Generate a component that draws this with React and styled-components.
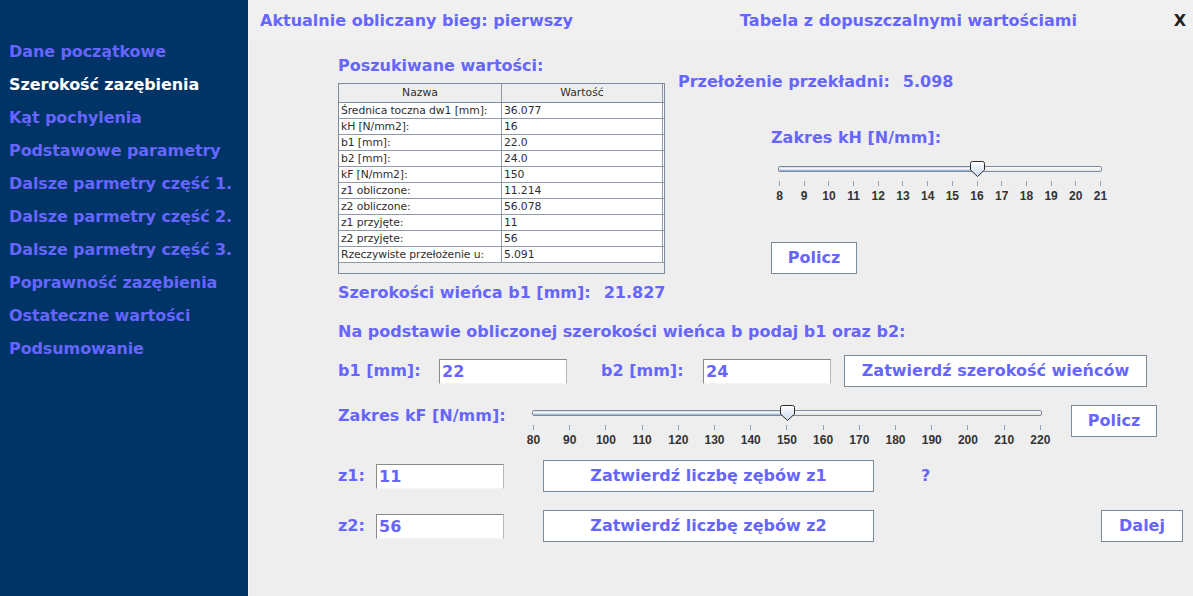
import React from "react";
import styled, { createGlobalStyle } from "styled-components";

const PURPLE = "#6666ff";
const FONT = `"DejaVu Sans", Verdana, sans-serif`;

const GlobalStyle = createGlobalStyle`
  html, body {
    margin: 0;
    padding: 0;
    background: #eeeeee;
    font-family: ${FONT};
  }
`;

const navItems = [
  "Dane początkowe",
  "Szerokość zazębienia",
  "Kąt pochylenia",
  "Podstawowe parametry",
  "Dalsze parmetry część 1.",
  "Dalsze parmetry część 2.",
  "Dalsze parmetry część 3.",
  "Poprawność zazębienia",
  "Ostateczne wartości",
  "Podsumowanie",
];

const tableRows = [
  ["Średnica toczna dw1 [mm]:", "36.077"],
  ["kH [N/mm2]:", "16"],
  ["b1 [mm]:", "22.0"],
  ["b2 [mm]:", "24.0"],
  ["kF [N/mm2]:", "150"],
  ["z1 obliczone:", "11.214"],
  ["z2 obliczone:", "56.078"],
  ["z1 przyjęte:", "11"],
  ["z2 przyjęte:", "56"],
  ["Rzeczywiste przełożenie u:", "5.091"],
];

const Slider = ({ min, max, step, value, width }) => {
  const pct = ((value - min) / (max - min)) * 100;
  const ticks = [];
  for (let v = min; v <= max; v += step) ticks.push(v);
  return (
    <SliderBox $w={width}>
      <Track>
        <Fill style={{ width: `${pct}%` }} />
        <Thumb style={{ left: `calc(${pct}% - 7.5px)` }}>
          <svg width="15" height="16" viewBox="0 0 15 16">
            <defs>
              <linearGradient id="thumbGrad" x1="0" y1="0" x2="0" y2="1">
                <stop offset="0" stopColor="#ffffff" />
                <stop offset="1" stopColor="#c9d8ee" />
              </linearGradient>
            </defs>
            <path
              d="M2.5 0.5 H12.5 Q14.5 0.5 14.5 2.5 V9 L7.5 15.5 L0.5 9 V2.5 Q0.5 0.5 2.5 0.5 Z"
              fill="url(#thumbGrad)"
              stroke="#2b2b2b"
              strokeWidth="1"
            />
          </svg>
        </Thumb>
      </Track>
      <Ticks>
        {ticks.map((v) => (
          <Tick key={v}>
            <TickMark />
            <TickLabel>{v}</TickLabel>
          </Tick>
        ))}
      </Ticks>
    </SliderBox>
  );
};

const App = () => {
  return (
    <>
      <GlobalStyle />
      <Frame>
        <Sidebar>
          {navItems.map((item, i) => (
            <NavItem key={item} $active={i === 1}>
              {item}
            </NavItem>
          ))}
        </Sidebar>
        <Main>
          <Header>
            <Title>Aktualnie obliczany bieg: pierwszy</Title>
            <Title>Tabela z dopuszczalnymi wartościami</Title>
            <Close>X</Close>
          </Header>
          <Body>
            <TopSection>
              <LeftCol>
                <SectionTitle>Poszukiwane wartości:</SectionTitle>
                <TableBox>
                  <HeadRow>
                    <HeadCell>Nazwa</HeadCell>
                    <HeadCell>Wartość</HeadCell>
                  </HeadRow>
                  {tableRows.map(([name, val]) => (
                    <DataRow key={name}>
                      <Cell>{name}</Cell>
                      <Cell>{val}</Cell>
                    </DataRow>
                  ))}
                </TableBox>
                <ResultLine>
                  Szerokości wieńca b1 [mm]:<Value>21.827</Value>
                </ResultLine>
              </LeftCol>
              <RightCol>
                <RatioLine>
                  Przełożenie przekładni:<Value>5.098</Value>
                </RatioLine>
                <KhBlock>
                  <Label>Zakres kH [N/mm]:</Label>
                  <KhSlider>
                    <Slider min={8} max={21} step={1} value={16} width={324} />
                  </KhSlider>
                  <Button $w={86}>Policz</Button>
                </KhBlock>
              </RightCol>
            </TopSection>

            <Prompt>Na podstawie obliczonej szerokości wieńca b podaj b1 oraz b2:</Prompt>

            <FormRow $top={13}>
              <FieldLabel $w={101}>b1 [mm]:</FieldLabel>
              <Field readOnly value="22" />
              <Spacer $w={34} />
              <FieldLabel $w={102}>b2 [mm]:</FieldLabel>
              <Field readOnly value="24" />
              <Spacer $w={13} />
              <Button $w={303}>Zatwierdź szerokość wieńców</Button>
            </FormRow>

            <SliderRow>
              <FieldLabel $w={194} $top={1}>Zakres kF [N/mm]:</FieldLabel>
              <Slider min={80} max={220} step={10} value={150} width={510} />
              <Spacer $w={29} />
              <Button $w={86}>Policz</Button>
            </SliderRow>

            <FormRow $top={13}>
              <FieldLabel $w={38}>z1:</FieldLabel>
              <Field readOnly value="11" />
              <Spacer $w={39} />
              <Button $w={331}>Zatwierdź liczbę zębów z1</Button>
              <Spacer $w={47} />
              <FieldLabel>?</FieldLabel>
            </FormRow>

            <FormRow $top={18}>
              <FieldLabel $w={38}>z2:</FieldLabel>
              <Field readOnly value="56" />
              <Spacer $w={39} />
              <Button $w={331}>Zatwierdź liczbę zębów z2</Button>
              <Button $w={82} $push>
                Dalej
              </Button>
            </FormRow>
          </Body>
        </Main>
      </Frame>
    </>
  );
};

export default App;

const Frame = styled.div`
  display: flex;
  width: 1193px;
  height: 596px;
  overflow: hidden;
  background: #eeeeee;
`;

const Sidebar = styled.nav`
  width: 248px;
  flex-shrink: 0;
  background: #003366;
  padding: 35px 0 0 9px;
  box-sizing: border-box;
`;

const NavItem = styled.div`
  font: bold 16px/33px ${FONT};
  letter-spacing: -0.1px;
  color: ${(p) => (p.$active ? "#ffffff" : PURPLE)};
  white-space: nowrap;
`;

const Main = styled.div`
  flex: 1;
  display: flex;
  flex-direction: column;
`;

const Header = styled.div`
  height: 42px;
  display: grid;
  grid-template-columns: 480px 1fr auto;
  align-items: center;
  padding: 0 7px 0 12px;
  background: #f0f0f0;
`;

const Title = styled.div`
  font: bold 16px/20px ${FONT};
  color: ${PURPLE};
  white-space: nowrap;
`;

const Close = styled.div`
  font: bold 16px/20px ${FONT};
  color: #222222;
`;

const Body = styled.div`
  flex: 1;
  padding: 0 10px 0 90px;
  box-shadow: inset 1px 0 #f9f9f9;
`;

const TopSection = styled.div`
  display: flex;
  align-items: flex-start;
`;

const LeftCol = styled.div`
  width: 340px;
  display: flex;
  flex-direction: column;
  align-items: flex-start;
`;

const RightCol = styled.div`
  display: flex;
  flex-direction: column;
  align-items: flex-start;
`;

const Label = styled.div`
  font: bold 16px/20px ${FONT};
  color: ${PURPLE};
  white-space: nowrap;
`;

const SectionTitle = styled(Label)`
  margin-top: 14px;
`;

const ResultLine = styled(Label)`
  margin-top: 9px;
`;

const RatioLine = styled(Label)`
  margin-top: 30px;
`;

const Value = styled.span`
  margin-left: 13px;
`;

const KhBlock = styled.div`
  margin: 36px 0 0 93px;
  display: flex;
  flex-direction: column;
  align-items: flex-start;
`;

const KhSlider = styled.div`
  margin: 13px 0 0 7px;
`;

const TableBox = styled.div`
  margin-top: 7px;
  width: 327px;
  height: 191px;
  box-sizing: border-box;
  border: 1px solid #7d8b99;
  background: #eeeeee;
`;

const HeadRow = styled.div`
  display: grid;
  grid-template-columns: 163px 161px;
  height: 18px;
  border-bottom: 1px solid #7d8b99;
`;

const HeadCell = styled.div`
  font: 10.8px/18px ${FONT};
  color: #2e2e2e;
  text-align: center;
  border-right: 1px solid #8e9aa6;
  background: #eeeeee;
`;

const DataRow = styled.div`
  display: grid;
  grid-template-columns: 163px 161px;
  height: 16px;
  box-sizing: border-box;
  border-bottom: 1px solid #8e9aa6;
  background: #ffffff;
`;

const Cell = styled.div`
  font: 10.8px/15px ${FONT};
  letter-spacing: -0.1px;
  color: #2e2e2e;
  padding-left: 2px;
  white-space: nowrap;
  overflow: hidden;
  border-right: 1px solid #8e9aa6;
`;

const Button = styled.button`
  width: ${(p) => p.$w}px;
  height: 32px;
  margin: 0 0 0 ${(p) => (p.$push ? "auto" : "0")};
  padding: 0;
  background: #ffffff;
  border: 1px solid #7a8a99;
  border-radius: 0;
  font: bold 16px/20px ${FONT};
  color: ${PURPLE};
  white-space: nowrap;
  flex-shrink: 0;
  ${KhBlock} & {
    margin-top: 39px;
  }
`;

const Prompt = styled(Label)`
  margin-top: 19px;
`;

const FormRow = styled.div`
  display: flex;
  align-items: center;
  margin-top: ${(p) => p.$top}px;
`;

const SliderRow = styled.div`
  display: flex;
  align-items: flex-start;
  margin-top: 18px;
`;

const FieldLabel = styled.div`
  width: ${(p) => (p.$w ? `${p.$w}px` : "auto")};
  margin-top: ${(p) => p.$top || 0}px;
  flex-shrink: 0;
  font: bold 16px/20px ${FONT};
  color: ${PURPLE};
  white-space: nowrap;
`;

const Field = styled.input`
  width: 128px;
  height: 25px;
  box-sizing: border-box;
  padding: 0 2px;
  margin: 0;
  border: 1px solid #8a8a8a;
  border-bottom-color: #f4f4f4;
  border-right-color: #b8b8b8;
  background: #ffffff;
  font: bold 16px ${FONT};
  color: ${PURPLE};
  outline: none;
  flex-shrink: 0;
`;

const Spacer = styled.div`
  width: ${(p) => p.$w}px;
  flex-shrink: 0;
`;

const SliderBox = styled.div`
  width: ${(p) => p.$w}px;
  padding-top: 5px;
  flex-shrink: 0;
`;

const Track = styled.div`
  position: relative;
  height: 6px;
  box-sizing: border-box;
  border: 1px solid #7d8b99;
  border-radius: 2px;
  background: linear-gradient(#fbfbfb, #e4e4e4);
`;

const Fill = styled.div`
  height: 100%;
  background: linear-gradient(#c4d6ee, #ffffff 45%, #7f9fd3);
`;

const Thumb = styled.div`
  position: absolute;
  top: -6px;
  width: 15px;
  height: 16px;
  line-height: 0;
`;

const Ticks = styled.div`
  display: flex;
  justify-content: space-between;
  margin-top: 9px;
  padding: 0 1px;
`;

const Tick = styled.div`
  width: 1px;
  display: flex;
  flex-direction: column;
  align-items: center;
`;

const TickMark = styled.div`
  width: 1px;
  height: 5px;
  background: #8ea3bd;
`;

const TickLabel = styled.div`
  margin-top: 3px;
  font: bold 12px/14px "Liberation Sans", Arial, sans-serif;
  color: #333333;
  white-space: nowrap;
`;
